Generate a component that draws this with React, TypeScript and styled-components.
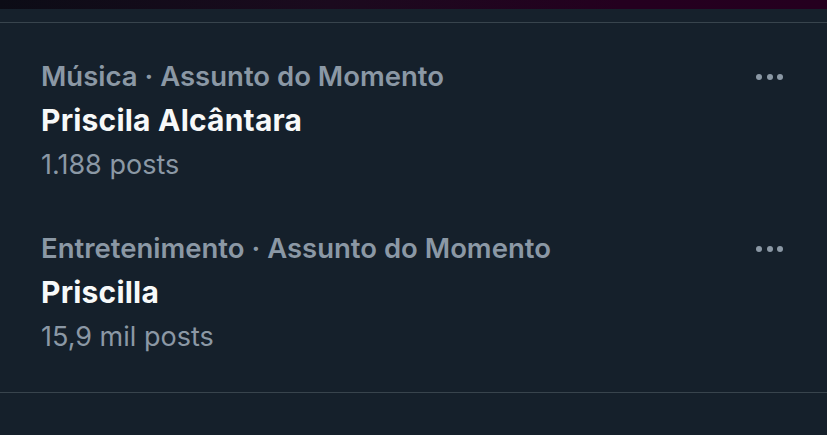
import React from 'react';
import styled, { createGlobalStyle } from 'styled-components';

const GlobalStyle = createGlobalStyle`
  html, body {
    margin: 0;
    padding: 0;
    background: #15202b;
  }
  body {
    font-family: Inter, 'Noto Sans', 'Liberation Sans', sans-serif;
    -webkit-font-smoothing: antialiased;
  }
`;

const Page = styled.div`
  width: 827px;
  height: 435px;
  background: #15202b;
  overflow: hidden;
`;

const TopBand = styled.div`
  height: 9px;
  background: linear-gradient(90deg, #0c0c16 0%, #1b0a1e 40%, #24001f 75%, #25001f 100%);
`;

const TopGap = styled.div`
  height: 13px;
  background: #16212c;
`;

const Divider = styled.div`
  height: 1px;
  background: #38444d;
`;

const TrendList = styled.div`
  padding-bottom: 25px;
`;

const TrendItem = styled.div`
  display: flex;
  justify-content: space-between;
  align-items: flex-start;
  padding: 31px 44px 8px 41px;
`;

const TrendText = styled.div`
  display: flex;
  flex-direction: column;
`;

const Category = styled.span`
  font-size: 27.5px;
  line-height: 44px;
  font-weight: 600;
  color: #8b98a5;
`;

const Title = styled.span`
  font-size: 30px;
  line-height: 45px;
  font-weight: 700;
  letter-spacing: 0.2px;
  color: #f7f9f9;
`;

const Count = styled.span`
  font-size: 27px;
  line-height: 44px;
  font-weight: 400;
  color: #8b98a5;
`;

const MoreButton = styled.div`
  display: flex;
  gap: 4.5px;
  margin-top: 20px;
`;

const Dot = styled.span`
  width: 6px;
  height: 6px;
  border-radius: 50%;
  background: #8b98a5;
`;

const trends = [
  { category: 'Música · Assunto do Momento', title: 'Priscila Alcântara', count: '1.188 posts' },
  { category: 'Entretenimento · Assunto do Momento', title: 'Priscilla', count: '15,9 mil posts' },
];

const App: React.FC = () => (
  <Page>
    <GlobalStyle />
    <TopBand />
    <TopGap />
    <Divider />
    <TrendList>
      {trends.map((t) => (
        <TrendItem key={t.title}>
          <TrendText>
            <Category>{t.category}</Category>
            <Title>{t.title}</Title>
            <Count>{t.count}</Count>
          </TrendText>
          <MoreButton>
            <Dot />
            <Dot />
            <Dot />
          </MoreButton>
        </TrendItem>
      ))}
    </TrendList>
    <Divider />
  </Page>
);

export default App;
